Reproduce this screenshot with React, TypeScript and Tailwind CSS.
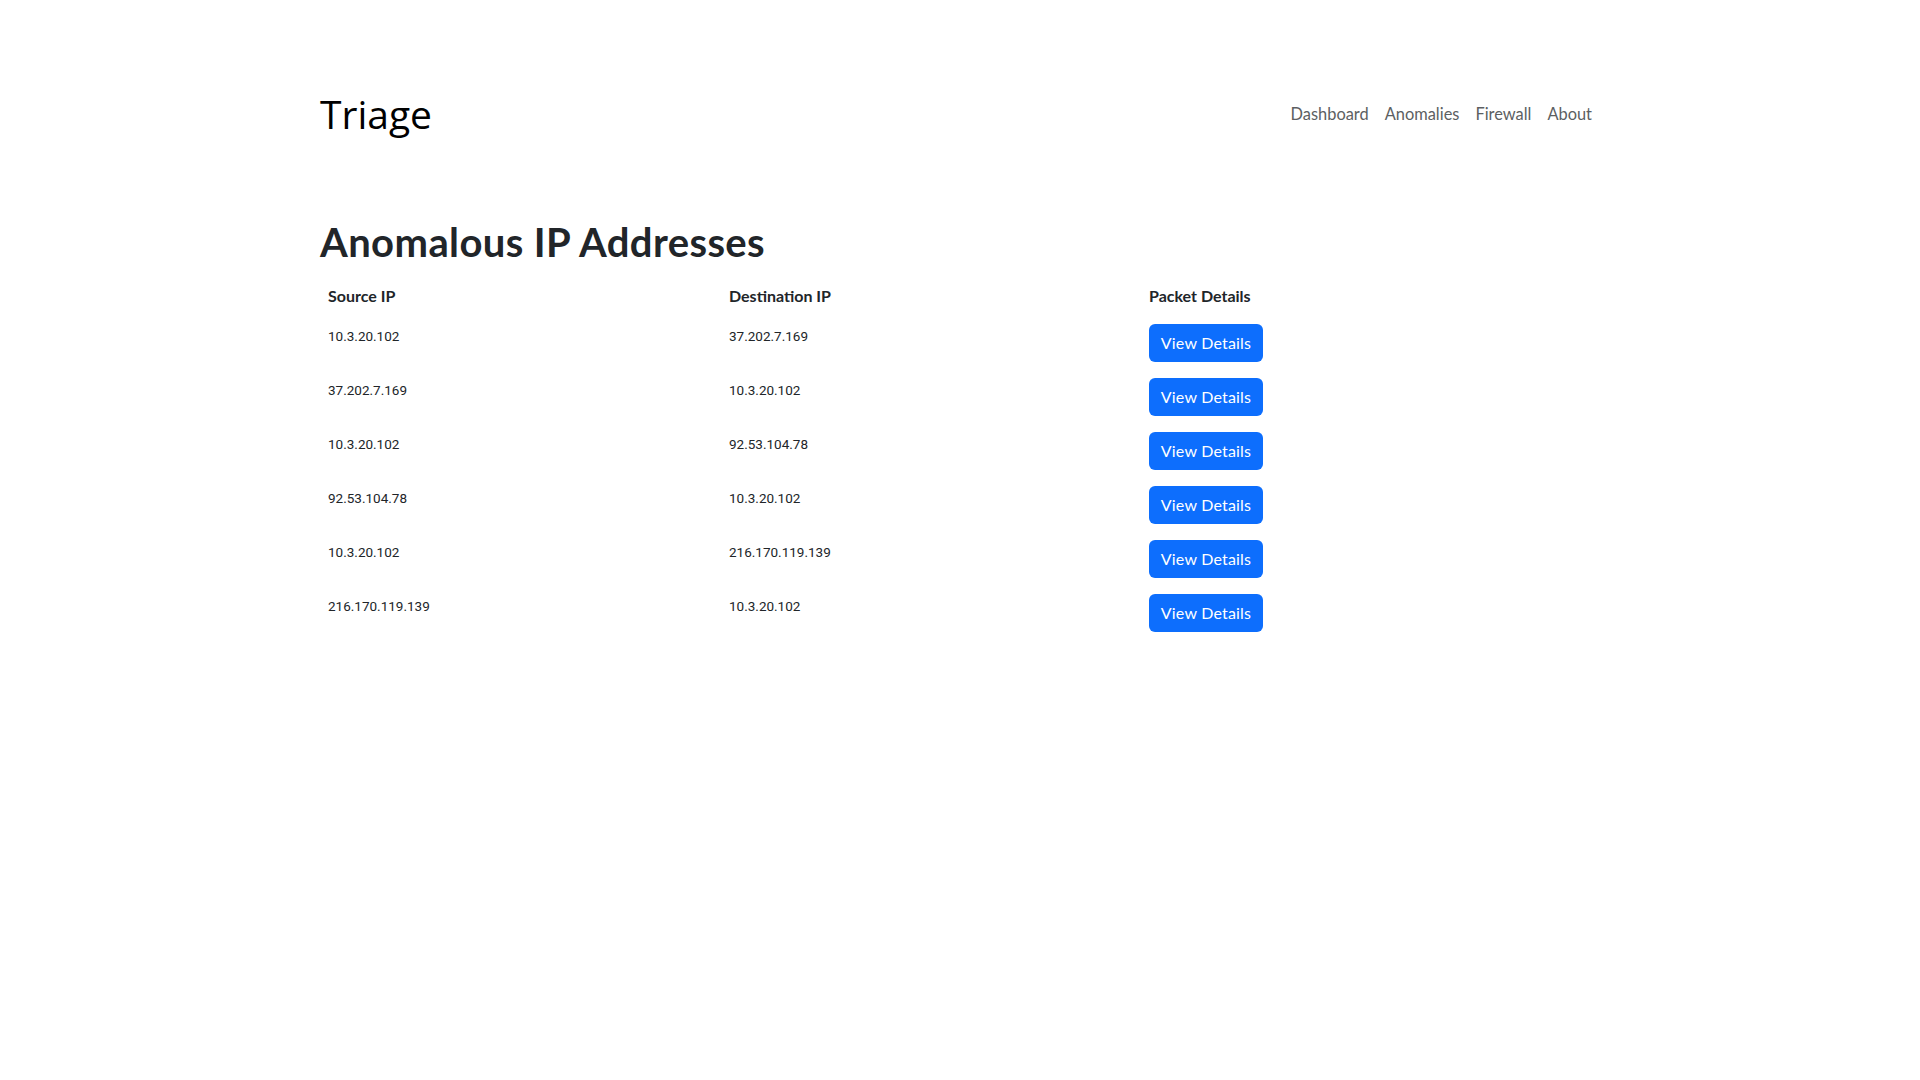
import React from "react";

const rows = [
  ["10.3.20.102", "37.202.7.169"],
  ["37.202.7.169", "10.3.20.102"],
  ["10.3.20.102", "92.53.104.78"],
  ["92.53.104.78", "10.3.20.102"],
  ["10.3.20.102", "216.170.119.139"],
  ["216.170.119.139", "10.3.20.102"],
];

const navLinks = ["Dashboard", "Anomalies", "Firewall", "About"];

export default function App() {
  return (
    <div className="min-h-screen bg-white text-[#212529] font-['Lato',sans-serif]">
      <div className="mx-auto w-[1280px] pt-[90px]">
        <header className="flex h-[48px] items-center justify-between">
          <div className="font-['Open_Sans',sans-serif] text-[39px] leading-[48px] text-black">
            Triage
          </div>
          <nav className="flex">
            {navLinks.map((l) => (
              <a key={l} href="#" className="px-2 text-[16.4px] leading-6 text-[#5c5f62]">
                {l}
              </a>
            ))}
          </nav>
        </header>

        <h1 className="mt-[80px] mb-[10px] text-[40px] font-bold leading-[48px] tracking-[0.4px]">
          Anomalous IP Addresses
        </h1>

        <div className="w-full">
          <div className="grid grid-cols-[401px_420px_1fr] text-[16px] font-bold leading-6">
            <div className="p-2">Source IP</div>
            <div className="p-2">Destination IP</div>
            <div className="p-2">Packet Details</div>
          </div>
          {rows.map(([src, dst], i) => (
            <div
              key={i}
              className="grid grid-cols-[401px_420px_1fr] font-['Roboto',sans-serif] text-[13.5px] leading-6"
            >
              <div className="p-2">{src}</div>
              <div className="p-2">{dst}</div>
              <div className="p-2">
                <button className="h-[38px] w-[114px] rounded-md bg-[#0d6efd] text-center font-['Lato',sans-serif] text-[16px] tracking-[0.2px] text-white">
                  View Details
                </button>
              </div>
            </div>
          ))}
        </div>
      </div>
    </div>
  );
}
